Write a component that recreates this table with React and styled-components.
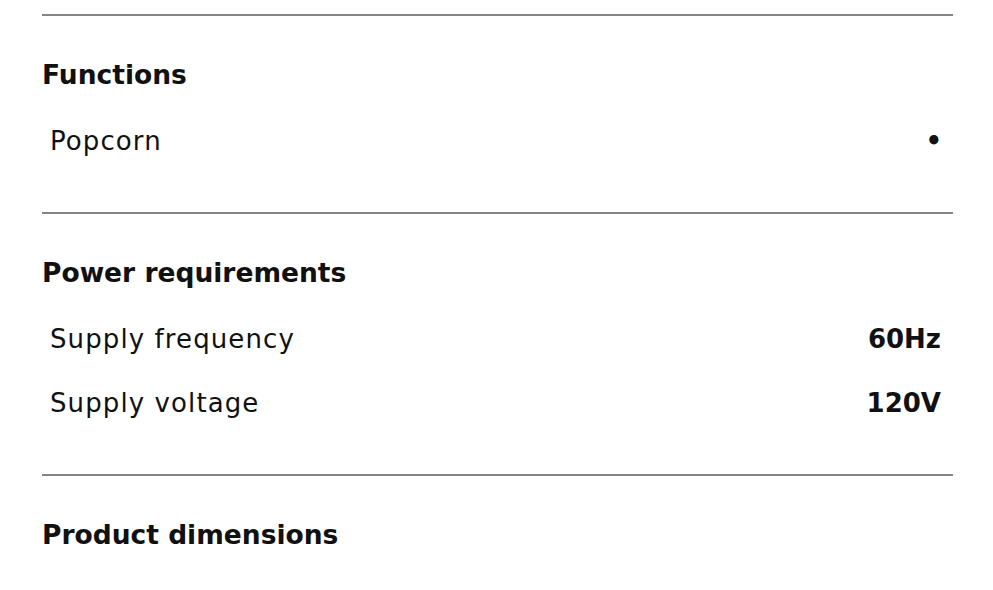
import React from "react";
import styled, { createGlobalStyle } from "styled-components";

const Global = createGlobalStyle`
  html, body { margin: 0; padding: 0; background: #fff; }
  body { font-family: "DejaVu Sans", "Liberation Sans", sans-serif; color: #111; }
`;

const Page = styled.div`
  padding: 14px 40px 0 42px;
`;

const Section = styled.section`
  border-top: 2px solid #858585;
  padding: 41px 0 39px;
`;

const Heading = styled.h2`
  margin: 0 0 16px;
  font-size: 26.5px;
  line-height: 36px;
  font-weight: 700;
`;

const Row = styled.div`
  display: flex;
  justify-content: space-between;
  align-items: center;
  height: 64px;
  padding: 0 12px 0 8px;
`;

const Label = styled.span`
  font-size: 26px;
  letter-spacing: 1.1px;
  font-weight: 400;
`;

const Value = styled.span`
  font-size: 26px;
  font-weight: 700;
  margin-right: ${(p) => (p.$bullet ? "-1px" : "0")};
`;

const data = [
  { title: "Functions", rows: [["Popcorn", "•", true]] },
  {
    title: "Power requirements",
    rows: [
      ["Supply frequency", "60Hz"],
      ["Supply voltage", "120V"],
    ],
  },
  { title: "Product dimensions", rows: [] },
];

export default function App() {
  return (
    <>
      <Global />
      <Page>
        {data.map((s) => (
          <Section key={s.title}>
            <Heading>{s.title}</Heading>
            {s.rows.map(([l, v, b]) => (
              <Row key={l}>
                <Label>{l}</Label>
                <Value $bullet={b}>{v}</Value>
              </Row>
            ))}
          </Section>
        ))}
      </Page>
    </>
  );
}
